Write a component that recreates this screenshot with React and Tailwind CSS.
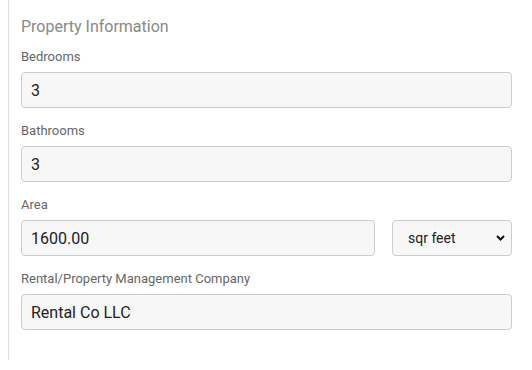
import { useState } from 'react';

const labelCls = 'block text-[13px] leading-4 text-[#666] mb-[7px]';
const inputCls =
  'w-full h-9 rounded border border-[#ccc] bg-[#f7f7f7] px-[9px] text-[16px] text-[#222] outline-none';

function Field({ label, value, onChange, first }) {
  return (
    <div className={first ? '' : 'mt-[15px]'}>
      <label className={labelCls}>{label}</label>
      <input className={inputCls} value={value} onChange={(e) => onChange(e.target.value)} />
    </div>
  );
}

export default function App() {
  const [bedrooms, setBedrooms] = useState('3');
  const [bathrooms, setBathrooms] = useState('3');
  const [area, setArea] = useState('1600.00');
  const [unit, setUnit] = useState('sqr feet');
  const [company, setCompany] = useState('Rental Co LLC');

  return (
    <div className="bg-white min-h-[370px] pl-2 pt-0 font-['Roboto',sans-serif]">
      <div className="border-l border-[#ddd] pl-3 pr-5 pt-[17px] pb-[30px] w-[524px]">
        <h3 className="text-[16px] leading-5 text-[#888] mb-[12px]">Property Information</h3>

        <Field first label="Bedrooms" value={bedrooms} onChange={setBedrooms} />
        <Field label="Bathrooms" value={bathrooms} onChange={setBathrooms} />

        {/* Area + unit */}
        <div className="mt-[15px]">
          <label className={labelCls}>Area</label>
          <div className="flex gap-[17px]">
            <input className={inputCls + ' flex-1'} value={area} onChange={(e) => setArea(e.target.value)} />
            <div className="relative w-[120px] shrink-0">
              <select
                className="appearance-none w-full h-9 rounded border border-[#ccc] bg-[#f7f7f7] pl-[15px] pr-6 text-[14px] text-[#222] outline-none"
                value={unit}
                onChange={(e) => setUnit(e.target.value)}
              >
                <option>sqr feet</option>
                <option>sqr meters</option>
              </select>
              <svg className="absolute right-[7px] top-[15px] pointer-events-none" width="9" height="6" viewBox="0 0 9 6">
                <path d="M1 1l3.5 3.5L8 1" fill="none" stroke="#111" strokeWidth="2" />
              </svg>
            </div>
          </div>
        </div>

        <Field label="Rental/Property Management Company" value={company} onChange={setCompany} />
      </div>
    </div>
  );
}
